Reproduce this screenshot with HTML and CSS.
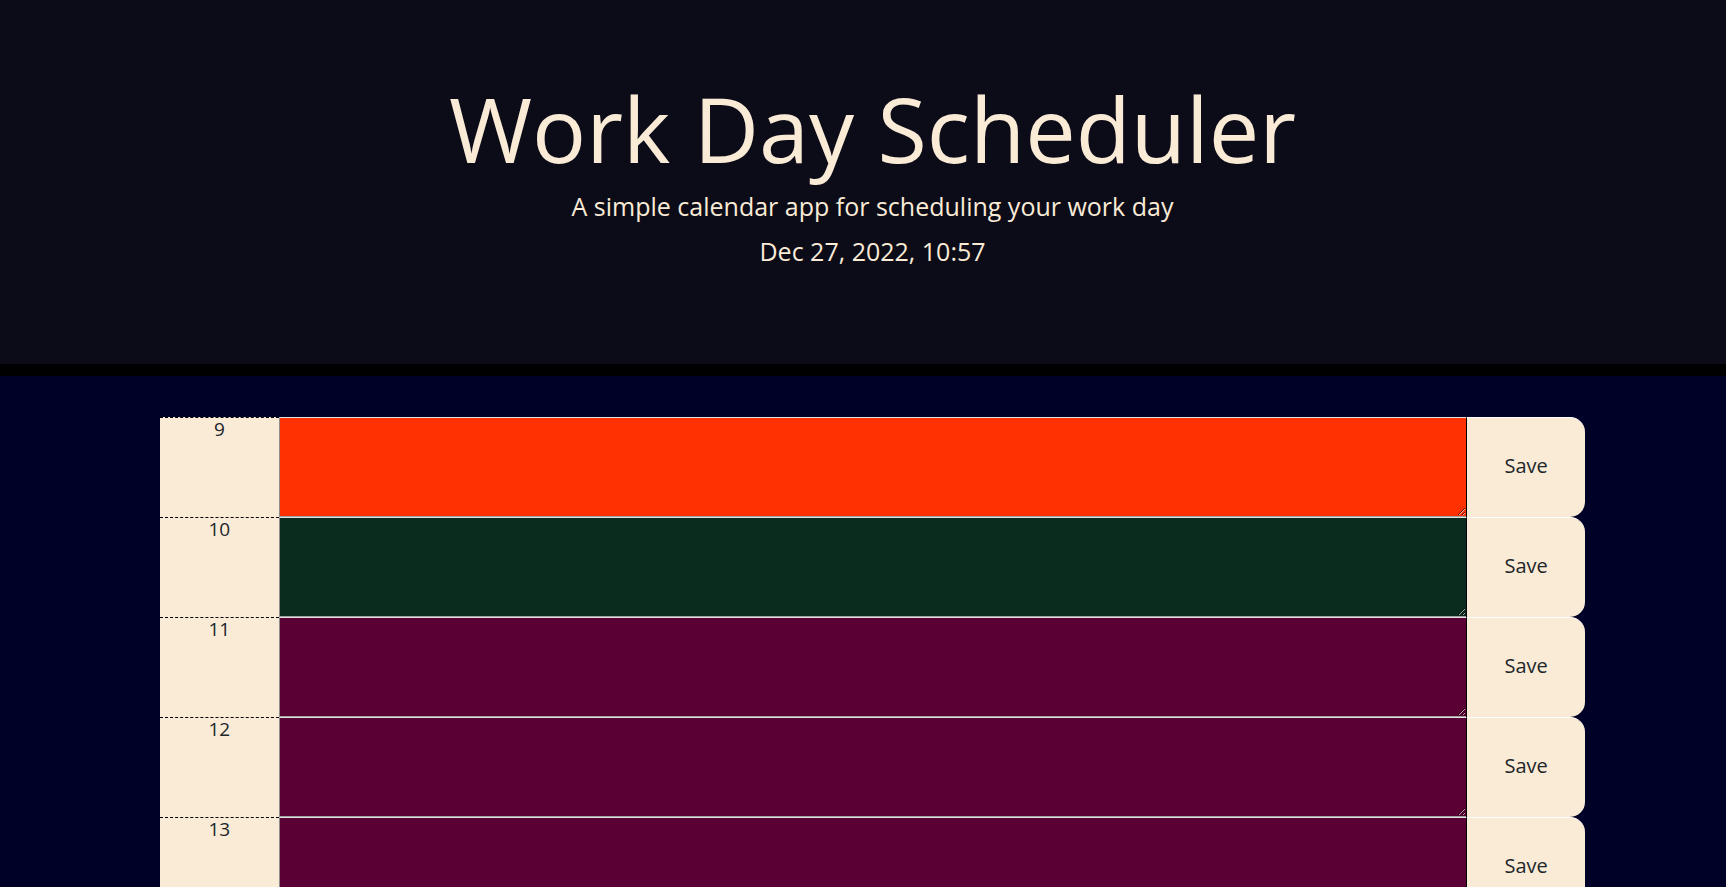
FILE: index.html
```html
<!DOCTYPE html>
<html lang="en">
<head>
<meta charset="utf-8">
<title>Work Day Scheduler</title>
<link rel="stylesheet" href="styles.css">
</head>
<body>
<header class="jumbotron">
  <h1 class="title">Work Day Scheduler</h1>
  <p class="lead">A simple calendar app for scheduling your work day</p>
  <p class="current-day">Dec 27, 2022, 10:57</p>
</header>
<main class="container">
  <div class="row time-block">
    <div class="hour">9</div>
    <textarea class="description present"></textarea>
    <button class="saveBtn">Save</button>
  </div>
  <div class="row time-block">
    <div class="hour">10</div>
    <textarea class="description future"></textarea>
    <button class="saveBtn">Save</button>
  </div>
  <div class="row time-block">
    <div class="hour">11</div>
    <textarea class="description past"></textarea>
    <button class="saveBtn">Save</button>
  </div>
  <div class="row time-block">
    <div class="hour">12</div>
    <textarea class="description past"></textarea>
    <button class="saveBtn">Save</button>
  </div>
  <div class="row time-block">
    <div class="hour">13</div>
    <textarea class="description past"></textarea>
    <button class="saveBtn">Save</button>
  </div>
  <div class="row time-block">
    <div class="hour">14</div>
    <textarea class="description past"></textarea>
    <button class="saveBtn">Save</button>
  </div>
  <div class="row time-block">
    <div class="hour">15</div>
    <textarea class="description past"></textarea>
    <button class="saveBtn">Save</button>
  </div>
  <div class="row time-block">
    <div class="hour">16</div>
    <textarea class="description past"></textarea>
    <button class="saveBtn">Save</button>
  </div>
  <div class="row time-block">
    <div class="hour">17</div>
    <textarea class="description past"></textarea>
    <button class="saveBtn">Save</button>
  </div>
</main>
</body>
</html>
```
FILE: styles.css
```css
html {
  scrollbar-width: none;
}
html::-webkit-scrollbar {
  width: 0;
  height: 0;
}
body {
  margin: 0;
  background-color: #000126;
  font-family: "Open Sans", "Noto Sans", sans-serif;
  color: #212529;
}
.jumbotron {
  background-color: #0c0b18;
  color: #faebd7;
  text-align: center;
  box-sizing: content-box;
  height: 284px;
  padding: 80px 0 0 19px;
  border-bottom: 12px solid #000;
}
.title {
  margin: 0;
  font-size: 90px;
  font-weight: 400;
  line-height: 96px;
}
.lead {
  margin: 15px 0 0;
  font-size: 25px;
  font-weight: 400;
  line-height: 30px;
}
.current-day {
  margin: 15px 0 0;
  font-size: 25px;
  line-height: 30px;
}
.container {
  width: 1425px;
  margin: 41px 0 0 160px;
}
.row {
  display: grid;
  grid-template-columns: 1fr 10fr 1fr;
  height: 100px;
}
.hour {
  background-color: #faebd7;
  border-top: 1px dashed #000;
  text-align: center;
  font-size: 19px;
  line-height: 22px;
  color: #212529;
}
.description {
  box-sizing: border-box;
  margin: 0;
  width: 100%;
  height: 100%;
  border: none;
  border-top: 1px solid #e2e2e2;
  border-left: 1px solid #8c8c8c;
  border-bottom: 1px solid #a0a0a0;
  resize: vertical;
  font-family: inherit;
  color: #fff;
  color-scheme: dark;
}
.present {
  background-color: #ff3100;
}
.future {
  background-color: #092c1e;
}
.past {
  background-color: #5a0034;
}
.saveBtn {
  background-color: #faebd7;
  border: none;
  border-top: 1px solid #fff;
  border-left: 1px solid #000;
  border-radius: 0 15px 15px 0;
  font-family: inherit;
  font-size: 20px;
  color: #212529;
  padding: 0 0 4px;
  cursor: pointer;
}
```
